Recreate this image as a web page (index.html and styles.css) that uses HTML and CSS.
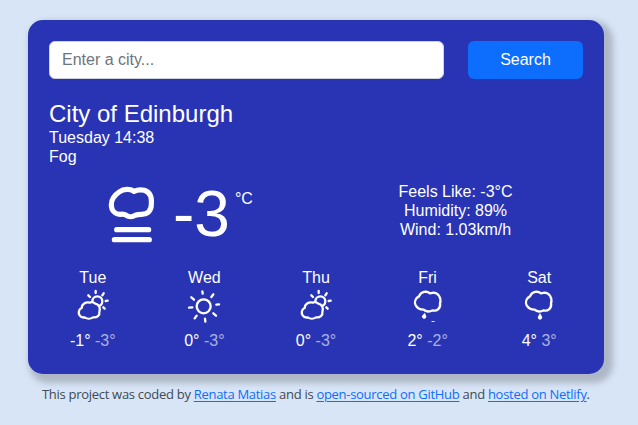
FILE: index.html
```
<!DOCTYPE html>
<html lang="en">
<head>
<meta charset="utf-8">
<title>Weather</title>
<link rel="stylesheet" href="styles.css">
</head>
<body>
<svg class="defs" aria-hidden="true">
  <symbol id="partly" viewBox="-6 0 108 108">
    <circle cx="61" cy="40" r="15" class="thin"/>
    <path class="rays" d="M56 9v6M80 16l-4 6M92 38l-6 1M83 62l-4-4M34 22l5 5"/>
    <path class="thin cloud" d="M38 44C26 41 14 49 14 60C5 63 3 75 8 82C12 88 18 89 23 88C30 93 41 93 48 88C60 90 69 82 67 73C72 61 66 49 55 47C49 42 42 42 38 44Z"/>
  </symbol>
  <symbol id="sun" viewBox="0 0 108 108">
    <circle cx="53" cy="55" r="21" class="thin"/>
    <path class="rays" d="M49 10l1 7M82 19l-6 8M99 49l-8 1M90 83l-8-7M58 101l-1-9M26 91l6-8M9 59l10-1M16 28l8 7"/>
  </symbol>
  <symbol id="raincloud" viewBox="-5 0 108 108">
    <path class="thin" d="M55 16C45 8 28 10 22 25C12 30 7 41 12 52C17 62 27 65 36 65C43 72 55 72 62 67C76 71 88 60 85 46C90 30 80 14 65 14L55 16Z"/>
  </symbol>
</svg>
<main class="card">
  <form class="search">
    <input type="text" placeholder="Enter a city...">
    <button type="button">Search</button>
  </form>
  <h1>City of Edinburgh</h1>
  <div>Tuesday 14:38</div>
  <div>Fog</div>
  <section class="current">
    <div class="now">
      <svg class="fog" viewBox="0 0 195 210">
        <path d="M102 34C91 26 70 26 59 35C44 45 34 57 34 74C34 92 46 103 62 103C68 102 74 103 79 106C86 111 98 111 105 106C111 103 118 103 125 103C145 103 154 91 154 73C156 51 149 36 133 31C121 28 110 30 102 34ZM50 149H146M43 179H148"/>
      </svg>
      <span class="temp">-3</span><span class="unit">°C</span>
    </div>
    <div class="details">
      <div>Feels Like: -3°C</div>
      <div>Humidity: 89%</div>
      <div>Wind: 1.03km/h</div>
    </div>
  </section>
  <section class="forecast">
    <div class="day"><div>Tue</div><svg><use href="#partly"/></svg><div class="range">-1° <span>-3°</span></div></div>
    <div class="day"><div>Wed</div><svg><use href="#sun"/></svg><div class="range">0° <span>-3°</span></div></div>
    <div class="day"><div>Thu</div><svg><use href="#partly"/></svg><div class="range">0° <span>-3°</span></div></div>
    <div class="day"><div>Fri</div><svg viewBox="0 0 108 108"><use href="#raincloud"/><path class="drop" d="M45 74l-6 6a6.5 6.5 0 1 0 8 1ZM63 102q6-6 13 0Z"/></svg><div class="range">2° <span>-2°</span></div></div>
    <div class="day"><div>Sat</div><svg viewBox="0 0 108 108"><use href="#raincloud"/><path class="drop" d="M57 75l-5 9a6.5 6.5 0 1 0 10 0Z"/></svg><div class="range">4° <span>3°</span></div></div>
  </section>
</main>
<footer>This project was coded by <a href="#">Renata Matias</a> and is <a href="#">open-sourced on GitHub</a> and <a href="#">hosted on Netlify</a>.</footer>
</body>
</html>
```
FILE: styles.css
```
* { box-sizing: border-box; }
body {
  margin: 0;
  padding-top: 20px;
  background: #d8e5f6;
  font: 16px/19px "Liberation Sans", Arial, sans-serif;
}
.defs { display: none; }
.card {
  width: 576px;
  height: 354px;
  margin-left: 28px;
  padding: 21px;
  border-radius: 15px;
  background: #2834b4;
  color: #fff;
  box-shadow: 5px 5px 6px 4px #adb7c5;
}
.search { display: flex; gap: 24px; margin: 0 0 20px; }
input {
  width: 395px;
  height: 38px;
  padding: 0 12px;
  border: 1px solid #ced4da;
  border-radius: 6px;
  background: #fff;
  font: inherit;
}
input::placeholder { color: #6c757d; opacity: 1; }
button {
  width: 115px;
  height: 38px;
  padding: 0 0 2px;
  border: 0;
  border-radius: 6px;
  background: #0d6efd;
  color: #fff;
  font: inherit;
}
h1 { margin: 0; font-size: 24px; line-height: 29px; font-weight: 400; }
.current { display: flex; height: 86px; margin: 15px -12px 0; }
.now { display: flex; width: 279px; padding-left: 63px; }
.fog { width: 65px; height: 70px; margin-top: -1px; flex: none; }
.fog path {
  fill: none;
  stroke: #fff;
  stroke-width: 15.5;
  stroke-linecap: round;
  stroke-linejoin: round;
}
.temp { margin-left: 8px; font-size: 64px; line-height: 67px; }
.unit { margin: 8px 0 0 5px; }
.details { width: 279px; padding-top: 1px; text-align: center; }
.forecast { display: grid; grid-template-columns: repeat(5, 1fr); margin: 1px -12px 0; text-align: center; }
.day svg { display: block; width: 36px; height: 36px; margin: 1px auto 0; overflow: visible; }
.thin, .rays { fill: none; stroke: #fff; stroke-width: 7; stroke-linejoin: round; }
.rays { stroke-linecap: round; }
.cloud { fill: #2834b4; }
.drop { fill: #fff; }
.range { margin-top: 7px; }
.range span { opacity: .6; }
footer {
  margin: 10px 0 0 42px;
  color: #414954;
  font: 13px/20px "Open Sans", "Noto Sans", sans-serif;
  letter-spacing: -.29px;
  white-space: nowrap;
}
a { color: #0d6efd; text-underline-offset: 2px; }
```
